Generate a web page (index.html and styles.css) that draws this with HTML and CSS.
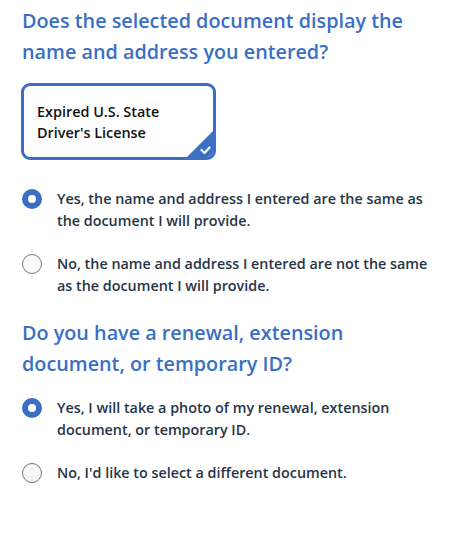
FILE: index.html
```html
<!DOCTYPE html>
<html lang="en">
<head>
<meta charset="utf-8">
<link rel="stylesheet" href="styles.css">
</head>
<body>
<main class="page">
  <section class="question">
    <h2 class="q-title">Does the selected document display the name and address you entered?</h2>
    <div class="doc-card">
      <span class="doc-name">Expired U.S. State Driver's License</span>
      <span class="doc-check">
        <svg viewBox="0 0 28 28" width="28" height="28" aria-hidden="true">
          <polygon points="28,0 28,28 0,28" fill="#3a6fc4"/>
          <path d="M15.5 20 L18.5 23 L23.5 17.5" fill="none" stroke="#fff" stroke-width="2.2" stroke-linecap="round" stroke-linejoin="round"/>
        </svg>
      </span>
    </div>
    <div class="options after-card">
      <label class="option">
        <span class="radio checked"></span>
        <span class="opt-text">Yes, the name and address I entered are the same as the document I will provide.</span>
      </label>
      <label class="option">
        <span class="radio"></span>
        <span class="opt-text">No, the name and address I entered are not the same as the document I will provide.</span>
      </label>
    </div>
  </section>
  <section class="question">
    <h2 class="q-title">Do you have a renewal, extension document, or temporary ID?</h2>
    <div class="options after-title">
      <label class="option">
        <span class="radio checked"></span>
        <span class="opt-text">Yes, I will take a photo of my renewal, extension document, or temporary ID.</span>
      </label>
      <label class="option">
        <span class="radio"></span>
        <span class="opt-text">No, I'd like to select a different document.</span>
      </label>
    </div>
  </section>
</main>
</body>
</html>
```
FILE: styles.css
```css
* { box-sizing: border-box; }
html, body { margin: 0; padding: 0; background: #fff; }
body { font-family: "Open Sans", "Noto Sans", sans-serif; }
.page { padding: 5px 22px 0 22px; width: 453px; }
.question { display: flex; flex-direction: column; }
.q-title {
  margin: 0;
  font-size: 19.8px;
  line-height: 31px;
  font-weight: 600;
  color: #3a6fc4;
}
.doc-card {
  position: relative;
  margin-top: 16px;
  margin-left: -1px;
  width: 195px;
  height: 77px;
  border: 3px solid #3a6fc4;
  border-radius: 9px;
  padding: 15px 13px 13px;
  overflow: hidden;
}
.doc-name {
  display: block;
  font-size: 14.4px;
  line-height: 21px;
  font-weight: 600;
  color: #111;
  width: 150px;
}
.doc-check {
  position: absolute;
  right: -1px;
  bottom: -1px;
  width: 28px;
  height: 28px;
  display: flex;
}
.options { display: flex; flex-direction: column; gap: 21px; margin-bottom: 20px; }
.options.after-card { margin-top: 28px; }
.options.after-title { margin-top: 18px; }
.option { display: flex; align-items: flex-start; gap: 15px; }
.radio {
  flex: none;
  width: 20px;
  height: 20px;
  border-radius: 50%;
  border: 1px solid #777;
  background: #f7f7f7;
  margin-top: 1px;
}
.radio.checked {
  border: 6px solid #3a6fc4;
  background: #fff;
}
.opt-text {
  font-size: 14.35px;
  line-height: 22px;
  font-weight: 600;
  color: #283548;
}
```
